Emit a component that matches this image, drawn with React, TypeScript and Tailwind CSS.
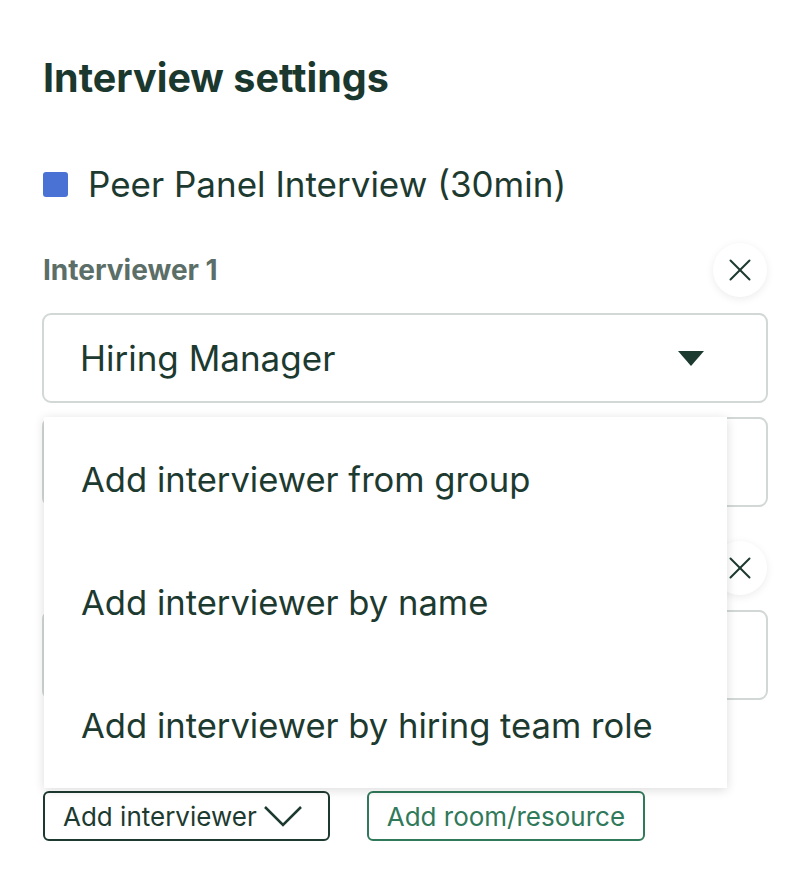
import { X } from 'lucide-react'

const font = { fontFamily: 'Inter, "Noto Sans", sans-serif' }

function CloseButton() {
  return (
    <button className="flex h-[54px] w-[54px] items-center justify-center rounded-full bg-white shadow-[0_2px_8px_rgba(0,0,0,0.08)]">
      <X size={38} strokeWidth={1.25} className="text-[#1d3a30]" />
    </button>
  )
}

function SelectBox({ value, caret }: { value?: string; caret?: boolean }) {
  return (
    <div className="flex h-[90px] items-center justify-between rounded-[9px] border-2 border-[#d2d8d5] bg-white pl-[36px] pr-[62px]">
      <span className="text-[35px] text-[#1d3a30]">{value}</span>
      {caret && (
        <svg width="26" height="15" viewBox="0 0 26 15">
          <path d="M0 0 H26 L13 15 Z" fill="#1d3a30" />
        </svg>
      )}
    </div>
  )
}

const menuItems = [
  'Add interviewer from group',
  'Add interviewer by name',
  'Add interviewer by hiring team role',
]

export default function App() {
  return (
    <div className="min-h-[880px] bg-white" style={font}>
      <div className="w-[768px] pl-[42px] pt-[54px]">
        <h1 className="pl-px text-[39.5px] font-bold leading-[48px] text-[#1b382e]">
          Interview settings
        </h1>

        <div className="mt-[62px] flex items-center gap-[20px] pl-px">
          <span className="h-[25px] w-[25px] rounded-[3px] bg-[#4a72d4]" />
          <span className="text-[35px] leading-[40px] text-[#1d3a30]">
            Peer Panel Interview (30min)
          </span>
        </div>

        <div className="mt-[39px] flex items-center justify-between">
          <span className="pl-px text-[28px] font-bold text-[#5b6e67]">Interviewer 1</span>
          <div className="mr-[1px]">
            <CloseButton />
          </div>
        </div>

        <div className="mt-[16px] flex flex-col gap-[14px]">
          <SelectBox value="Hiring Manager" caret />
          <SelectBox />
        </div>

        {/* interviewer 2 row, label sits under the open menu */}
        <div className="mt-[34px] flex items-center justify-end">
          <div className="mr-[1px]">
            <CloseButton />
          </div>
        </div>

        <div className="mt-[15px]">
          <SelectBox />
        </div>

        <div className="relative mt-[91px] flex items-center gap-[37px] pl-px">
          <div className="absolute bottom-[calc(100%+3px)] left-[2px] w-[683px] bg-white py-[1px] shadow-[0_2px_10px_rgba(0,0,0,0.14)]">
            {menuItems.map((item) => (
              <div
                key={item}
                className="flex h-[123px] items-center pl-[37px] text-[34.6px] text-[#1d3a30]"
              >
                {item}
              </div>
            ))}
          </div>
          <button className="flex h-[50px] items-center gap-[6px] rounded-[6px] border-2 border-[#1d3a30] pl-[18px] pr-[25px] text-[26px] text-[#1d3a30]">
            Add interviewer
            <svg width="40" height="22" viewBox="0 0 40 22" fill="none">
              <path d="M2 2 L20 20 L38 2" stroke="#1d3a30" strokeWidth="2.5" />
            </svg>
          </button>
          <button className="flex h-[50px] items-center rounded-[6px] border-2 border-[#30795a] px-[18px] text-[26px] text-[#30795a]">
            Add room/resource
          </button>
        </div>
      </div>
    </div>
  )
}
